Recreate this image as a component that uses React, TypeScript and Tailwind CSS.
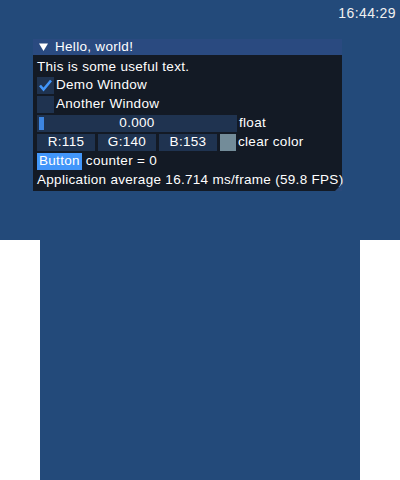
import React from "react";

const font = { fontFamily: '"Liberation Sans", Arial, sans-serif' };

export default function App() {
  return (
    <div className="w-[400px] h-[480px] bg-white flex flex-col" style={font}>
      <div className="w-[400px] h-[240px] bg-[#234a7a] flex flex-col relative">
        <div className="flex justify-end pr-[4px] pt-[4px] h-[39px]">
          <span className="text-[14px] leading-[18px] text-[#f0f0f0] tracking-[0.4px]">16:44:29</span>
        </div>
        <div className="ml-[33px] w-[309px] flex flex-col text-white text-[13.5px] tracking-[0.3px]">
          <div className="h-[16px] bg-[#2a4a80] flex items-center pl-[6px] gap-[7px]">
            <svg width="9" height="8" viewBox="0 0 9 8"><polygon points="0,0.5 9,0.5 4.5,8" fill="#ffffff" /></svg>
            <span className="leading-[16px]">Hello, world!</span>
          </div>
          <div className="bg-[#131a25] relative flex flex-col pl-[4px] pt-[3px] pb-[2px] gap-[2px]">
            <div className="h-[17px] flex items-center leading-[17px]">This is some useful text.</div>
            <div className="h-[17px] flex items-center gap-[2px]">
              <div className="w-[17px] h-[17px] bg-[#1f3350] flex items-center justify-center">
                <svg width="15" height="15" viewBox="0 0 15 15">
                  <polyline points="2,7.5 5.5,11.5 13,2.5" fill="none" stroke="#4296fa" strokeWidth="2.6" strokeLinejoin="miter" strokeLinecap="butt" />
                </svg>
              </div>
              <span>Demo Window</span>
            </div>
            <div className="h-[17px] flex items-center gap-[2px]">
              <div className="w-[17px] h-[17px] bg-[#1f3350]" />
              <span>Another Window</span>
            </div>
            <div className="h-[17px] flex items-center gap-[2px]">
              <div className="w-[200px] h-[17px] bg-[#1f3350] relative flex items-center justify-center">
                <div className="absolute left-[2px] top-[2px] w-[5px] h-[13px] bg-[#3d85e0]" />
                <span>0.000</span>
              </div>
              <span>float</span>
            </div>
            <div className="h-[17px] flex items-center gap-[3px]">
              <div className="w-[58px] h-[17px] bg-[#1f3350] flex items-center justify-center">R:115</div>
              <div className="w-[58px] h-[17px] bg-[#1f3350] flex items-center justify-center">G:140</div>
              <div className="w-[58px] h-[17px] bg-[#1f3350] flex items-center justify-center">B:153</div>
              <div className="w-[16px] h-[17px] bg-[#738c99]" />
              <span className="ml-[-1px]">clear color</span>
            </div>
            <div className="h-[17px] flex items-center gap-[4px]">
              <div className="h-[17px] px-[2px] bg-[#4296fa] flex items-center">Button</div>
              <span>counter = 0</span>
            </div>
            <div className="h-[17px] flex items-center whitespace-nowrap">Application average 16.714 ms/frame (59.8 FPS)</div>
            <svg className="absolute right-0 bottom-0" width="7" height="7" viewBox="0 0 7 7">
              <polygon points="7,0 7,7 0,7" fill="#2a4a7a" />
            </svg>
          </div>
        </div>
      </div>
      <div className="w-[320px] h-[240px] ml-[40px] bg-[#234a7a]" />
    </div>
  );
}
